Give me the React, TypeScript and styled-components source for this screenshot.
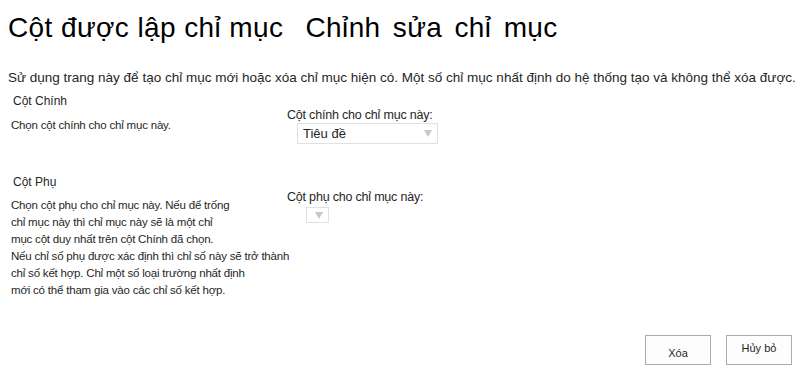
import React from 'react';
import styled, { createGlobalStyle } from 'styled-components';

const Global = createGlobalStyle`
  html, body {
    margin: 0;
    padding: 0;
    background: #fff;
    color: #262626;
    font-family: "Liberation Sans", Arial, sans-serif;
  }
`;

const Page = styled.div`
  width: 800px;
  height: 378px;
  padding: 0 8px;
  box-sizing: border-box;
  display: flex;
  flex-direction: column;
`;

const Title = styled.h1`
  margin: 10px 0 0;
  font-size: 28px;
  font-weight: normal;
  line-height: 36px;
  letter-spacing: 0.4px;
  color: #000;
  white-space: nowrap;
  display: flex;
  gap: 22px;
`;

const TitlePart = styled.span<{ $wordGap: number }>`
  word-spacing: ${(p) => p.$wordGap}px;
`;

const Intro = styled.p`
  margin: 24px 0 0;
  font-size: 13.5px;
  line-height: 16px;
  color: #262626;
  white-space: nowrap;
`;

const Section = styled.section<{ $top: number }>`
  margin-top: ${(p) => p.$top}px;
  display: grid;
  grid-template-columns: 279px 1fr;
`;

const Heading = styled.div`
  padding-left: 5px;
  font-size: 12px;
  line-height: 16px;
  color: #262626;
`;

const Help = styled.div<{ $top: number }>`
  margin-top: ${(p) => p.$top}px;
  padding-left: 3px;
  font-size: 11.5px;
  letter-spacing: -0.2px;
  line-height: 17px;
  color: #262626;
  white-space: nowrap;
`;

const Field = styled.div<{ $top: number }>`
  padding-top: ${(p) => p.$top}px;
  display: flex;
  flex-direction: column;
  align-items: flex-start;
`;

const Label = styled.div`
  font-size: 12.5px;
  line-height: 16px;
  color: #262626;
  letter-spacing: -0.2px;
`;

const Select = styled.div<{ $w: number; $h: number; $indent: number; $gap: number }>`
  margin: ${(p) => p.$gap}px 0 0 ${(p) => p.$indent}px;
  width: ${(p) => p.$w}px;
  height: ${(p) => p.$h}px;
  box-sizing: border-box;
  border: 1px solid #e1e1e1;
  background: #fff;
  display: flex;
  align-items: center;
  justify-content: space-between;
  padding: 0 5px;
  font-size: 13px;
  color: #262626;
`;

const Arrow = styled.span`
  width: 0;
  height: 0;
  border-left: 4px solid transparent;
  border-right: 4px solid transparent;
  border-top: 7px solid #c8c8c8;
`;

const Footer = styled.div`
  margin-top: auto;
  margin-bottom: 13px;
  display: flex;
  justify-content: flex-end;
  gap: 15px;
`;

const Button = styled.button<{ $pad: number }>`
  width: 66px;
  height: 30px;
  box-sizing: border-box;
  border: 1px solid #ababab;
  background: #fdfdfd;
  font-family: "Liberation Sans", Arial, sans-serif;
  font-size: 11px;
  color: #262626;
  padding: ${(p) => p.$pad}px 0 0;
  display: flex;
  justify-content: center;
  align-items: flex-start;
  line-height: 14px;
`;

export default function App() {
  return (
    <Page>
      <Global />
      <Title>
        <TitlePart $wordGap={0}>Cột được lập chỉ mục</TitlePart>
        <TitlePart $wordGap={4}>Chỉnh sửa chỉ mục</TitlePart>
      </Title>
      <Intro>
        Sử dụng trang này để tạo chỉ mục mới hoặc xóa chỉ mục hiện có. Một số chỉ mục nhất định do hệ thống tạo và không thể xóa được.
      </Intro>

      <Section $top={7}>
        <div>
          <Heading>Cột Chính</Heading>
          <Help $top={8}>Chọn cột chính cho chỉ mục này.</Help>
        </div>
        <Field $top={14}>
          <Label>Cột chính cho chỉ mục này:</Label>
          <Select $w={141} $h={21} $indent={10} $gap={0}>
            Tiêu đề
            <Arrow />
          </Select>
        </Field>
      </Section>

      <Section $top={30}>
        <div>
          <Heading>Cột Phụ</Heading>
          <Help $top={7}>
            Chọn cột phụ cho chỉ mục này. Nếu để trống
            <br />
            chỉ mục này thì chỉ mục này sẽ là một chỉ
            <br />
            mục cột duy nhất trên cột Chính đã chọn.
            <br />
            Nếu chỉ số phụ được xác định thì chỉ số này sẽ trở thành
            <br />
            chỉ số kết hợp. Chỉ một số loại trường nhất định
            <br />
            mới có thể tham gia vào các chỉ số kết hợp.
          </Help>
        </div>
        <Field $top={15}>
          <Label>Cột phụ cho chỉ mục này:</Label>
          <Select $w={23} $h={16} $indent={19} $gap={2}>
            <span />
            <Arrow />
          </Select>
        </Field>
      </Section>

      <Footer>
        <Button $pad={10}>Xóa</Button>
        <Button $pad={5}>Hủy bỏ</Button>
      </Footer>
    </Page>
  );
}
